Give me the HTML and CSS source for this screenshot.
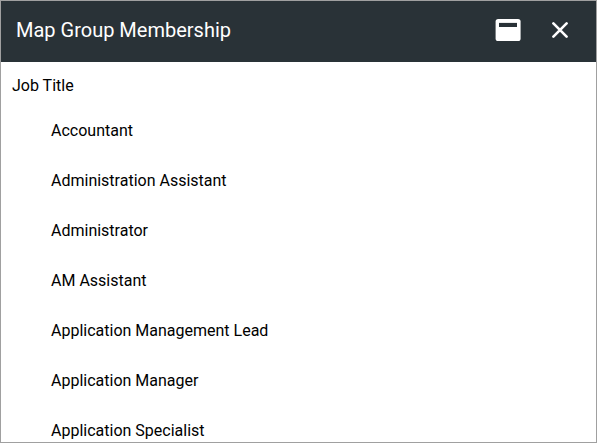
FILE: index.html
```
<!DOCTYPE html>
<html lang="en">
<head>
<meta charset="utf-8">
<title>Map Group Membership</title>
<link rel="stylesheet" href="styles.css">
</head>
<body>
<section class="dialog">
  <header class="bar">
    <h1 class="title">Map Group Membership</h1>
    <svg class="icon window" viewBox="0 0 26 24"><rect x="0.6" y="1" width="25" height="22" rx="2.6" fill="#fff"/><rect x="4" y="4.9" width="18" height="4.1" fill="#293237"/></svg>
    <svg class="icon close" viewBox="0 0 16 16"><path d="M1.4 1.4 14.6 14.6M14.6 1.4 1.4 14.6" stroke="#fff" stroke-width="2.6" stroke-linecap="round"/></svg>
  </header>
  <div class="body">
    <div class="label">Job Title</div>
    <ul class="list">
      <li>Accountant</li>
      <li>Administration Assistant</li>
      <li>Administrator</li>
      <li>AM Assistant</li>
      <li>Application Management Lead</li>
      <li>Application Manager</li>
      <li>Application Specialist</li>
    </ul>
  </div>
</section>
</body>
</html>
```
FILE: styles.css
```
* { box-sizing: border-box; }
body { margin: 0; font-family: Roboto, sans-serif; overflow: hidden; }
.dialog { height: 443px; border: 1px solid #a0a0a0; background: #fff; color: #000; overflow: hidden; }
.bar { display: flex; align-items: center; height: 61px; padding: 0 28px 3px 15px; background: #293237; color: #fff; }
.title { flex: 1; margin: 0; font-size: 20px; line-height: 24px; font-weight: 400; }
.icon { display: block; flex: none; }
.window { width: 26px; height: 24px; margin-right: 31px; }
.close { width: 16px; height: 16px; }
.body { padding: 12px 11px 0; font-size: 16px; }
.label { line-height: 24px; }
.list { list-style: none; margin: 8px 0 0; padding: 0 0 0 39px; }
.list li { height: 50px; line-height: 50px; }
```
